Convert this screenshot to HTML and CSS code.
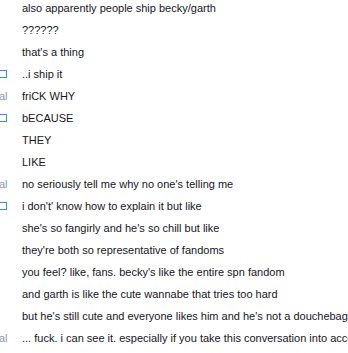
FILE: index.html
```html
<!DOCTYPE html>
<html lang="en">
<head>
  <meta charset="UTF-8">
  <title>chat log</title>
  <link rel="stylesheet" href="styles.css">
</head>
<body>
  <div class="log">
    <div class="row"><span class="tag"></span><span class="msg">also apparently people ship becky/garth</span></div>
    <div class="row"><span class="tag"></span><span class="msg">??????</span></div>
    <div class="row"><span class="tag"></span><span class="msg">that's a thing</span></div>
    <div class="row"><span class="tag"><span class="box"></span></span><span class="msg">..i ship it</span></div>
    <div class="row"><span class="tag name">al</span><span class="msg">friCK WHY</span></div>
    <div class="row"><span class="tag"><span class="box"></span></span><span class="msg">bECAUSE</span></div>
    <div class="row"><span class="tag"></span><span class="msg">THEY</span></div>
    <div class="row"><span class="tag"></span><span class="msg">LIKE</span></div>
    <div class="row"><span class="tag name">al</span><span class="msg">no seriously tell me why no one's telling me</span></div>
    <div class="row"><span class="tag"><span class="box"></span></span><span class="msg">i don't' know how to explain it but like</span></div>
    <div class="row"><span class="tag"></span><span class="msg">she's so fangirly and he's so chill but like</span></div>
    <div class="row"><span class="tag"></span><span class="msg">they're both so representative of fandoms</span></div>
    <div class="row"><span class="tag"></span><span class="msg">you feel? like, fans. becky's like the entire spn fandom</span></div>
    <div class="row"><span class="tag"></span><span class="msg">and garth is like the cute wannabe that tries too hard</span></div>
    <div class="row"><span class="tag"></span><span class="msg">but he's still cute and everyone likes him and he's not a douchebag</span></div>
    <div class="row"><span class="tag name">al</span><span class="msg">... fuck. i can see it. especially if you take this conversation into account</span></div>
  </div>
</body>
</html>
```

FILE: styles.css
```css
body {
  margin: 0;
  background-color: #ffffff;
  overflow: hidden;
}
.log {
  display: flex;
  flex-direction: column;
  font-family: "Liberation Sans", Arial, sans-serif;
  font-size: 11px;
  color: #16161e;
}
.row {
  display: flex;
  align-items: center;
  height: 16px;
  padding-bottom: 6px;
  white-space: nowrap;
}
.tag {
  width: 22px;
  flex-shrink: 0;
  display: flex;
  align-items: center;
}
.tag.name {
  color: #8a9aae;
  margin-left: -1px;
  width: 23px;
}
.box {
  display: block;
  width: 6px;
  height: 6px;
  margin-left: -1px;
  border: 1px solid #3a8ef0;
}
.msg {
  line-height: 16px;
}
```
